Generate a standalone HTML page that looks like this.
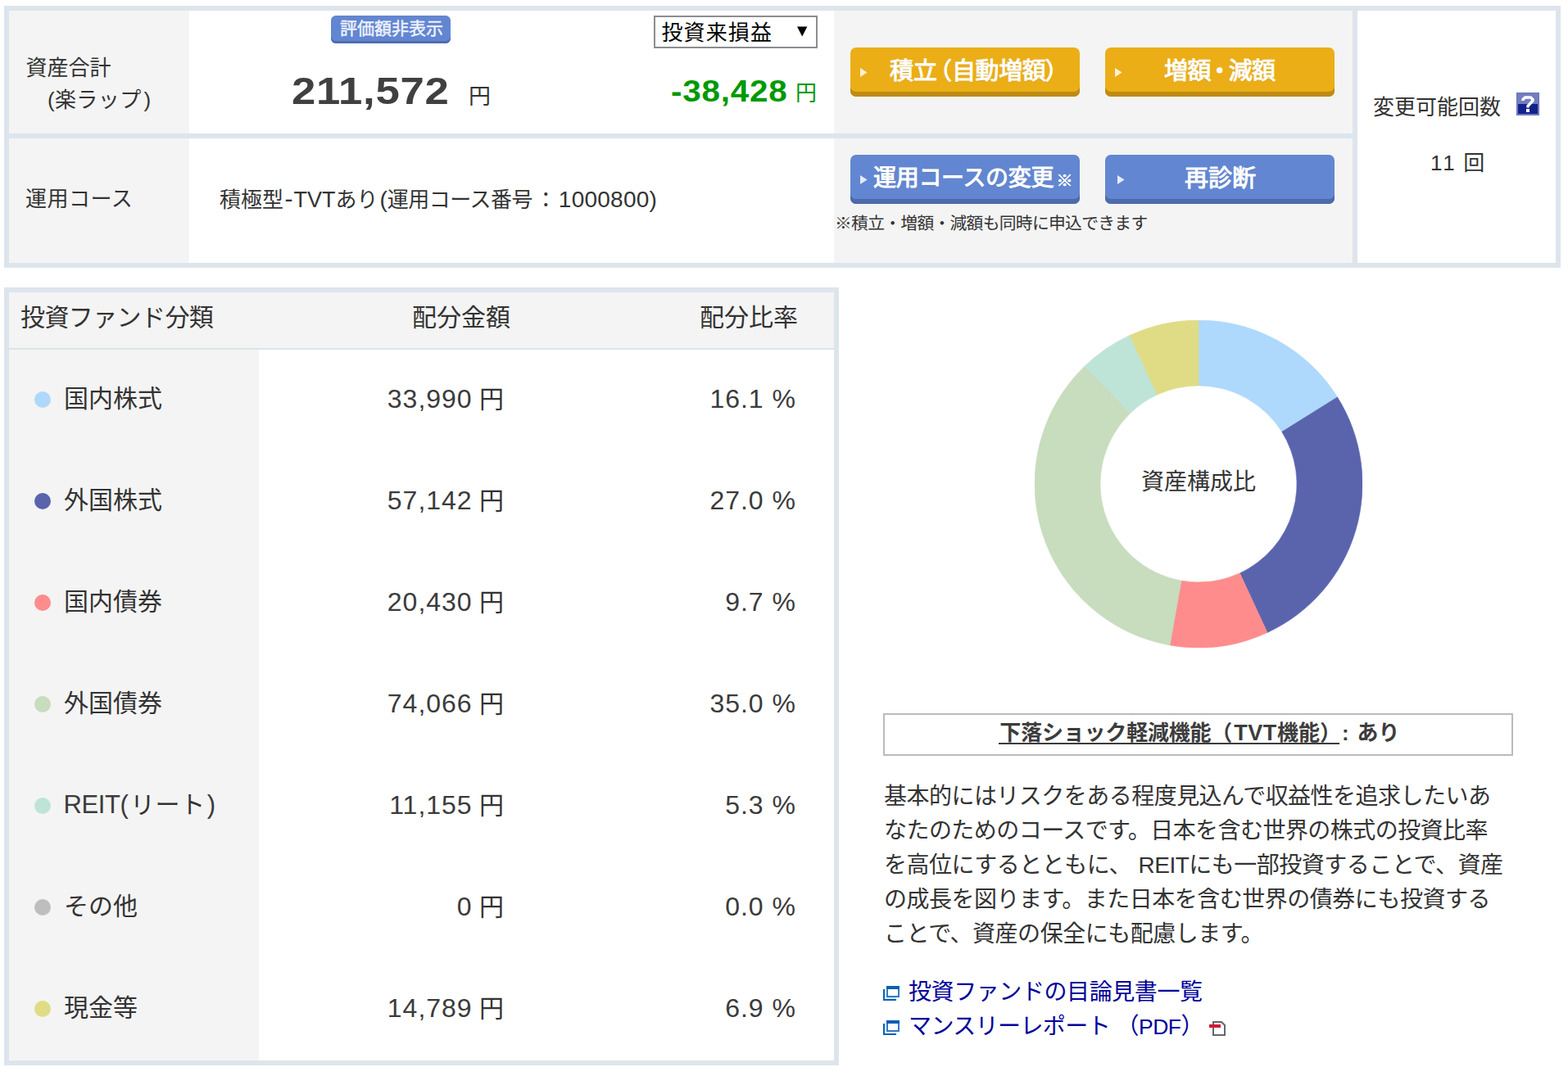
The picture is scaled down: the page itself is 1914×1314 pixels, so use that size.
<!DOCTYPE html>
<html lang="ja">
<head>
<meta charset="utf-8">
<title>資産状況</title>
<style>
html,body{margin:0;padding:0;}
body{width:1914px;height:1314px;position:relative;overflow:hidden;background:#fff;
  font-family:"Liberation Sans","Noto Sans CJK JP",sans-serif;color:#333;font-size:26px;}
.abs{position:absolute;}
.t{position:absolute;white-space:nowrap;margin:0;}
.cell{position:absolute;}
.g{background:#f4f4f4;}
.w{background:#fff;}
.frame{position:absolute;background:#dde5ec;}
.btn{position:absolute;width:280px;height:60px;border-radius:7px;box-sizing:border-box;color:#fff;font-weight:bold;}
.btn.y{background:#ebae17;box-shadow:inset 0 -6px 0 #be8b13;}
.btn.b{background:#6286d1;box-shadow:inset 0 -6px 0 #4d6aab;}
.btn .lb{position:absolute;white-space:nowrap;font-weight:normal;-webkit-text-stroke:1px #fff;text-shadow:0 1px 1px rgba(0,0,0,.15);}
.btn svg{position:absolute;}
.dot{position:absolute;width:20px;height:20px;border-radius:50%;left:42px;}
.row{position:absolute;left:11px;width:1007px;height:124px;}
.row .nm{position:absolute;left:67px;top:0;line-height:120px;font-size:30px;white-space:nowrap;}
.row .am{position:absolute;right:403px;top:0;line-height:122px;font-size:30px;white-space:nowrap;}
.row .pc{position:absolute;right:46px;top:0;line-height:122px;font-size:30px;white-space:nowrap;}
.row .n{font-size:32px;letter-spacing:1px;line-height:0;color:#3b3b3b;}
.z{line-height:0;}
a{color:#000099;text-decoration:none;}
.j{display:inline-block;position:relative;white-space:nowrap;}
</style>
</head>
<body>

<!-- ================= top summary table ================= -->
<div class="frame" style="left:5px;top:7px;width:1900px;height:320px;"></div>
<div class="cell g" style="left:11px;top:13px;width:220px;height:150px;"></div>
<div class="cell w" style="left:231px;top:13px;width:787px;height:150px;"></div>
<div class="cell g" style="left:1018px;top:13px;width:633px;height:150px;"></div>
<div class="cell g" style="left:11px;top:169px;width:220px;height:152px;"></div>
<div class="cell w" style="left:231px;top:169px;width:787px;height:152px;"></div>
<div class="cell g" style="left:1018px;top:169px;width:633px;height:152px;"></div>
<div class="cell w" style="left:1657px;top:13px;width:242px;height:308px;"></div>

<div id="lab1" class="t" style="left:31.5px;top:64px;line-height:39px;"><span class="j" style="width: 104px;">資産合計</span><br><span style="letter-spacing:.4px"><span class="j" style="width: 26.4062px;">　</span>(<span class="j" style="width: 108.609px;">楽ラップ</span>)</span></div>
<div id="lab2" class="t" style="left:31px;top:224px;line-height:39px;letter-spacing:.5px;"><span class="j" style="width: 134.5px;">運用コース</span></div>

<div id="badge" class="abs" style="left:404px;top:19px;width:146px;height:34px;box-sizing:border-box;border-radius:6px;background:#6286d1;box-shadow:inset 0 -3px 0 #4f6db0;color:#eef2fb;font-weight:normal;-webkit-text-stroke:0.45px #eef2fb;font-size:21px;line-height:32.5px;padding-left:2px;text-align:center;white-space:nowrap;"><span class="j" style="width: 126px;">評価額非表示</span></div>

<div id="total" class="t" style="left:355.5px;top:80.5px;line-height:60px;font-size:47px;font-weight:bold;color:#404040;letter-spacing:0.6px;transform-origin:0 50%;transform:scaleX(1.122);">211,572</div>
<div id="yen1" class="t" style="left:572px;top:98px;line-height:40px;font-size:27px;"><span class="j" style="width: 27px;">円</span></div>

<div id="sel" class="abs" style="left:798px;top:19px;width:200px;height:40px;box-sizing:border-box;border:2px solid #8c8c93;background:#fff;color:#000;">
  <span id="seltx" class="t" style="left:7.5px;top:0;line-height:38px;font-size:26px;letter-spacing:1.1px;"><span class="j" style="width: 135.5px;">投資来損益</span></span>
  <svg class="abs" style="left:173px;top:11px;" width="14" height="13" viewBox="0 0 14 13"><path d="M0 0.6h12.4l-6.2 12z" fill="#000"></path></svg>
</div>

<div id="pl" class="t" style="left:818.5px;top:82px;line-height:60px;font-size:36px;font-weight:bold;color:#009900;letter-spacing:0.7px;transform-origin:0 50%;transform:scaleX(1.122);">-38,428</div>
<div id="yen2" class="t" style="left:971px;top:94px;line-height:40px;font-size:26px;color:#009900;"><span class="j" style="width: 26px;">円</span></div>

<div id="course" class="t" style="left:268px;top:225px;line-height:39px;"><span id="c1"><span class="j" style="width: 78px;">積極型</span></span><span id="c2" class="z" style="font-size:30px;margin:0 1px 0 1.5px">-</span><span id="c3" class="z" style="font-size:27px">TVT</span><span id="c4"><span class="j" style="width: 54px;">あり</span></span><span id="c5" class="z" style="font-size:28px">(</span><span id="c6" style="letter-spacing:-0.5px"><span class="j" style="width: 180.5px;">運用コース番号</span></span><span id="c7"><span class="j" style="width: 26px;">：</span></span><span id="c8" class="z" style="font-size:28px;letter-spacing:.25px;margin-left:2.5px">1000800</span><span id="c9" class="z" style="font-size:28px">)</span></div>

<!-- buttons -->
<div id="b1" class="btn y" style="left:1038px;top:58px;">
  <svg style="left:12px;top:25px;" width="9" height="11" viewBox="0 0 9 11"><path d="M0 0L8.6 5.5L0 11z" fill="#fdf1d3"></path></svg>
  <span class="lb" style="left:48px;top:0;line-height:58px;font-size:29px;"><span class="j" style="width: 58px;">積立</span><span style="margin-left:-11px;"><span class="j" style="width: 29px;">（</span></span><span style="letter-spacing:-0.4px"><span class="j" style="width: 114.406px;">自動増額</span></span><span style="margin-left:-1px"><span class="j" style="width: 29px;">）</span></span></span>
</div>
<div id="b2" class="btn y" style="left:1349px;top:58px;">
  <svg style="left:12px;top:25px;" width="9" height="11" viewBox="0 0 9 11"><path d="M0 0L8.6 5.5L0 11z" fill="#fdf1d3"></path></svg>
  <span class="lb" style="left:72px;top:0;line-height:58px;font-size:29px;letter-spacing:-0.6px;"><span class="j" style="width: 56.8125px;">増額</span><span style="margin:0 -3px 0 -3.5px"><span class="j" style="width: 28.4062px;">・</span></span><span class="j" style="width: 56.8125px;">減額</span></span>
</div>
<div id="b3" class="btn b" style="left:1038px;top:189px;">
  <svg style="left:12px;top:25px;" width="9" height="11" viewBox="0 0 9 11"><path d="M0 0L8.6 5.5L0 11z" fill="#e4ebf8"></path></svg>
  <span class="lb" style="left:28px;top:0;line-height:58px;font-size:28px;letter-spacing:-0.3px;"><span class="j" style="width: 224.609px;">運用コースの変更</span><span style="font-size:20px;position:relative;top:1px;margin-left:-1px;-webkit-text-stroke:0.7px #fff"><span class="j" style="width: 19.7031px;">※</span></span></span>
</div>
<div id="b4" class="btn b" style="left:1349px;top:189px;">
  <svg style="left:15px;top:25px;" width="9" height="11" viewBox="0 0 9 11"><path d="M0 0L8.6 5.5L0 11z" fill="#e4ebf8"></path></svg>
  <span class="lb" style="left:97px;top:0;line-height:58px;font-size:29px;"><span class="j" style="width: 87px;">再診断</span></span>
</div>
<div id="note" class="t" style="left:1019px;top:258px;line-height:30px;font-size:20.8px;letter-spacing:-0.72px;"><span class="j" style="width: 391.328px;">※積立・増額・減額も同時に申込できます</span></div>

<div id="chg" class="t" style="left:1676px;top:112px;line-height:39px;"><span class="j" style="width: 156px;">変更可能回数</span></div>
<svg id="help" class="abs" style="left:1851px;top:113px;" width="28" height="28" viewBox="0 0 28 28">
  <rect width="28" height="28" fill="#6972b6"></rect><rect x="1" y="1" width="26" height="26" fill="#747dbd"></rect>
  <rect x="2" y="14" width="24" height="12" fill="#10228c"></rect>
  <path d="M8 10V8.5L10.5 6h7L20 8.5V10l-6 6.5v2" fill="none" stroke="#fff" stroke-width="3.4" stroke-linejoin="round"></path>
  <rect x="12" y="20" width="4" height="4" fill="#fff"></rect>
</svg>
<div id="cnt" class="t" style="left:1746px;top:180px;line-height:39px;"><span style="letter-spacing:2.6px">11</span><span style="margin-left:8px"><span class="j" style="width: 26px;">回</span></span></div>

<!-- ================= allocation table ================= -->
<div class="frame" style="left:5px;top:351px;width:1019px;height:950px;"></div>
<div class="cell g" style="left:11px;top:357px;width:1007px;height:68px;"></div>
<div class="cell" style="left:11px;top:425px;width:1007px;height:2px;background:#dbe4ea;"></div>
<div class="cell g" style="left:11px;top:427px;width:305px;height:868px;"></div>
<div class="cell w" style="left:316px;top:427px;width:702px;height:868px;"></div>

<div id="h1" class="t" style="left:25px;top:357px;line-height:62px;font-size:30px;letter-spacing:-0.6px;"><span class="j" style="width: 239.203px;">投資ファンド分類</span></div>
<div id="h2" class="t" style="left:503px;top:357px;line-height:62px;font-size:30px;"><span class="j" style="width: 120px;">配分金額</span></div>
<div id="h3" class="t" style="left:854px;top:357px;line-height:62px;font-size:30px;"><span class="j" style="width: 120px;">配分比率</span></div>

<div class="row" style="top:427px;"><i class="dot" style="top:51px;left:31px;background:#aed9fc;"></i><span class="nm"><span class="j" style="width: 120px;">国内株式</span></span><span class="am"><span class="n">33,990</span> <span class="j" style="width: 30px;">円</span></span><span class="pc"><span class="n">16.1 %</span></span></div>
<div class="row" style="top:551px;"><i class="dot" style="top:51px;left:31px;background:#5a64ad;"></i><span class="nm"><span class="j" style="width: 120px;">外国株式</span></span><span class="am"><span class="n">57,142</span> <span class="j" style="width: 30px;">円</span></span><span class="pc"><span class="n">27.0 %</span></span></div>
<div class="row" style="top:675px;"><i class="dot" style="top:51px;left:31px;background:#ff8c8c;"></i><span class="nm"><span class="j" style="width: 120px;">国内債券</span></span><span class="am"><span class="n">20,430</span> <span class="j" style="width: 30px;">円</span></span><span class="pc"><span class="n">9.7 %</span></span></div>
<div class="row" style="top:799px;"><i class="dot" style="top:51px;left:31px;background:#c8dcbe;"></i><span class="nm"><span class="j" style="width: 120px;">外国債券</span></span><span class="am"><span class="n">74,066</span> <span class="j" style="width: 30px;">円</span></span><span class="pc"><span class="n">35.0 %</span></span></div>
<div class="row" style="top:923px;"><i class="dot" style="top:51px;left:31px;background:#bee4d7;"></i><span class="nm"><span class="n" style="letter-spacing:-0.4px;font-size:31px;margin-left:-0.5px">REIT(</span><span style="letter-spacing:0.6px;margin-left:2.5px"><span class="j" style="width: 93.8125px;">リート</span></span><span class="n" style="letter-spacing:0;font-size:31px">)</span></span><span class="am"><span class="n">11,155</span> <span class="j" style="width: 30px;">円</span></span><span class="pc"><span class="n">5.3 %</span></span></div>
<div class="row" style="top:1047px;"><i class="dot" style="top:51px;left:31px;background:#bebebe;"></i><span class="nm"><span class="j" style="width: 92px;">その他</span></span><span class="am"><span class="n">0</span> <span class="j" style="width: 30px;">円</span></span><span class="pc"><span class="n">0.0 %</span></span></div>
<div class="row" style="top:1171px;"><i class="dot" style="top:51px;left:31px;background:#e0dc86;"></i><span class="nm"><span class="j" style="width: 90px;">現金等</span></span><span class="am"><span class="n">14,789</span> <span class="j" style="width: 30px;">円</span></span><span class="pc"><span class="n">6.9 %</span></span></div>

<!-- ================= donut chart ================= -->
<svg id="donut" class="abs" style="left:1263px;top:391px;" width="400" height="400" viewBox="-200 -200 400 400">
  <path d="M0.00 -200.00A200 200 0 0 1 169.54 -106.10L101.72 -63.66A120 120 0 0 0 0.00 -120.00Z" fill="#aed9fc" stroke="#aed9fc" stroke-width="0.6"></path>
  <path d="M169.54 -106.10A200 200 0 0 1 84.02 181.50L50.41 108.90A120 120 0 0 0 101.72 -63.66Z" fill="#5a64ad" stroke="#5a64ad" stroke-width="0.6"></path>
  <path d="M84.02 181.50A200 200 0 0 1 -35.00 196.91L-21.00 118.15A120 120 0 0 0 50.41 108.90Z" fill="#ff8c8c" stroke="#ff8c8c" stroke-width="0.6"></path>
  <path d="M-35.00 196.91A200 200 0 0 1 -138.73 -144.06L-83.24 -86.44A120 120 0 0 0 -21.00 118.15Z" fill="#c8dcbe" stroke="#c8dcbe" stroke-width="0.6"></path>
  <path d="M-138.73 -144.06A200 200 0 0 1 -84.02 -181.50L-50.41 -108.90A120 120 0 0 0 -83.24 -86.44Z" fill="#bee4d7" stroke="#bee4d7" stroke-width="0.6"></path>
  <path d="M-84.02 -181.50A200 200 0 0 1 -0.00 -200.00L-0.00 -120.00A120 120 0 0 0 -50.41 -108.90Z" fill="#e0dc86" stroke="#e0dc86" stroke-width="0.6"></path>

</svg>
<div id="dlab" class="t" style="left:1393px;top:568px;line-height:42px;font-size:28px;"><span class="j" style="width: 140px;">資産構成比</span></div>

<!-- ================= description ================= -->
<div id="tvt" class="abs" style="left:1078px;top:871px;width:769px;height:52px;box-sizing:border-box;border:2px solid #bbb;padding-left:3px;text-align:center;line-height:44px;font-weight:bold;font-size:26px;color:#3c3c3c;white-space:nowrap;"><i class="abs" style="left:139px;top:34px;width:416px;height:2px;background:#3c3c3c;"></i><span><span id="v1" style="letter-spacing:-0.2px"><span class="j" style="width: 287.812px;">下落ショック軽減機能（</span></span><span id="v2" class="z" style="font-size:27px;letter-spacing:0.6px">TVT</span><span id="v3"><span class="j" style="width: 78px;">機能）</span></span></span><span id="v4" style="margin:0 9px 0 1px">:</span><span id="v5"><span class="j" style="width: 54px;">あり</span></span></div>

<p id="desc" class="t" style="left:1079px;top:952px;line-height:42px;font-size:28px;"><span id="d1" style="letter-spacing:-0.527px"><span class="j" style="width: 756.781px;">基本的にはリスクをある程度見込んで収益性を追求したいあ</span></span><br><span id="d2" style="letter-spacing:-0.55px"><span class="j" style="width: 755.156px;">なたのためのコースです。日本を含む世界の株式の投資比率</span></span><br><span id="d3" style="letter-spacing:-0.496px"><span class="j" style="width: 310.547px;">を高位にするとともに、</span>REIT<span class="j" style="width: 392.062px;">にも一部投資することで、資産</span></span><br><span id="d4" style="letter-spacing:-0.492px"><span class="j" style="width: 756.719px;">の成長を図ります。また日本を含む世界の債券にも投資する</span></span><br><span id="d5" style="letter-spacing:-0.4875px"><span class="j" style="width: 476.719px;">ことで、資産の保全にも配慮します。</span></span></p>

<a id="lk1" class="t" style="left:1109px;top:1191px;line-height:42px;font-size:28px;letter-spacing:-0.42px;"><span class="j" style="width: 363.547px;">投資ファンドの目論見書一覧</span></a>
<a id="lk2" class="t" style="left:1109px;top:1233px;line-height:42px;font-size:28px;letter-spacing:-0.6px;"><span id="k1"><span class="j" style="width: 253.609px;">マンスリーレポート</span></span><span id="k2"><span class="j" style="width: 27.4062px;">（</span></span><span id="k3" class="z" style="font-size:26.5px;letter-spacing:-0.5px">PDF</span><span id="k4"><span class="j" style="width: 27.4062px;">）</span></span></a>

<svg id="ic1" class="abs" style="left:1078px;top:1204px;" width="20" height="18" viewBox="0 0 20 18"><path d="M0 4h2v12h14v2H0z" fill="#0a5fb4"></path><path d="M2 14h2v2h12v-2h-12v-0h-2z" fill="#d5e5f3"></path><rect x="4" y="0" width="16" height="14" fill="#2f7cc4"></rect><rect x="4" y="0" width="16" height="4" fill="#0a5fb4"></rect><rect x="6" y="4" width="12" height="8" fill="#fff"></rect></svg>
<svg id="ic2" class="abs" style="left:1078px;top:1246px;" width="20" height="18" viewBox="0 0 20 18"><path d="M0 4h2v12h14v2H0z" fill="#0a5fb4"></path><rect x="4" y="0" width="16" height="14" fill="#2f7cc4"></rect><rect x="4" y="0" width="16" height="4" fill="#0a5fb4"></rect><rect x="6" y="4" width="12" height="8" fill="#fff"></rect></svg>
<svg id="pdf" class="abs" style="left:1476px;top:1247px;" width="20" height="18" viewBox="0 0 20 18"><path d="M5 1h10l4 4v12H5z" fill="#fff" stroke="#666" stroke-width="2"></path><rect x="0" y="4" width="14" height="4" fill="#d01a38"></rect></svg>



</body></html>
